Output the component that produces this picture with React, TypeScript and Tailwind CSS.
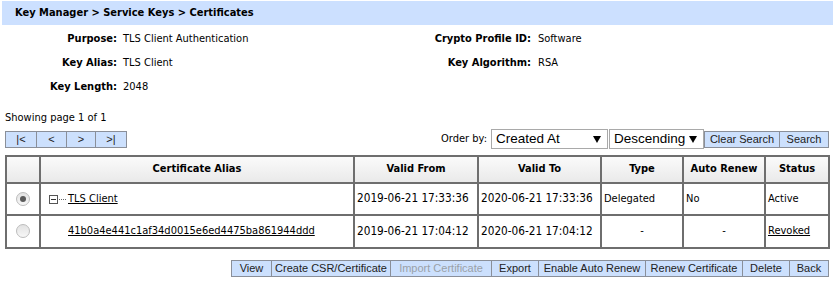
import type { ReactNode } from 'react'

const tah = "font-['DejaVu_Sans_Condensed','DejaVu_Sans',sans-serif]"
const arial = "font-['Liberation_Sans',Arial,sans-serif]"

function Btn({ children, w, disabled }: { children: ReactNode; w: string; disabled?: boolean }) {
	return (
		<button
			className={`${arial} ${w} h-[17px] -ml-px first:ml-0 border border-[#8a8f99] bg-[#cce0fd] text-[11px] leading-none ${
				disabled ? 'text-[#9aa0a8]' : 'text-[#222]'
			}`}>
			{children}
		</button>
	)
}

function Select({ value, w }: { value: string; w: string }) {
	return (
		<div className={`${w} h-5 flex items-center justify-between border border-[#a9a9a9] bg-white pl-1 pr-[6px]`}>
			<span className={`${arial} text-[13.5px] text-black leading-none`}>{value}</span>
			<svg width="8" height="7" viewBox="0 0 8 7">
				<path d="M0 0h8L4 7z" fill="#000" />
			</svg>
		</div>
	)
}

function Radio({ checked }: { checked?: boolean }) {
	return (
		<span className="inline-flex w-[14px] h-[14px] rounded-full border border-[#bdbdbd] bg-gradient-to-b from-[#e2e2e2] to-[#f7f7f7] items-center justify-center align-middle">
			{checked && <span className="w-[6px] h-[6px] rounded-full bg-[#5a5a5a]" />}
		</span>
	)
}

const th = 'border-2 border-[#6e6e6e] font-bold text-center px-1'
const td = 'border-2 border-[#6e6e6e] px-[2px]'
const num = 'text-[11.7px]'

export default function App() {
	return (
		<div className={`${tah} text-[11px] text-black w-[835px] h-[288px] bg-white`}>
			<div className="mx-[2px] mt-px h-6 bg-[#cce0ff] flex items-center pl-[13px] font-bold">
				Key Manager &gt; Service Keys &gt; Certificates
			</div>

			<div className="mt-[2px]">
				<div className="flex h-6 items-center">
					<div className="w-[117px] text-right font-bold">Purpose:</div>
					<div className="w-[306px] pl-[6px]">TLS Client Authentication</div>
					<div className="w-[108px] text-right font-bold">Crypto Profile ID:</div>
					<div className="pl-[7px]">Software</div>
				</div>
				<div className="flex h-6 items-center">
					<div className="w-[117px] text-right font-bold">Key Alias:</div>
					<div className="w-[306px] pl-[6px]">TLS Client</div>
					<div className="w-[108px] text-right font-bold">Key Algorithm:</div>
					<div className="pl-[7px]">RSA</div>
				</div>
				<div className="flex h-[25px] items-center">
					<div className="w-[117px] text-right font-bold">Key Length:</div>
					<div className="pl-[6px]">2048</div>
				</div>
			</div>

			<div className="pl-[5px] mt-[10px] h-4 flex items-center">Showing page 1 of 1</div>

			<div className="flex items-center justify-between pl-[5px] pr-[6px] mt-[1px] h-6">
				<div className="flex">
					<Btn w="w-[32px]">|&lt;</Btn>
					<Btn w="w-[31px]">&lt;</Btn>
					<Btn w="w-[30px]">&gt;</Btn>
					<Btn w="w-[32px]">&gt;|</Btn>
				</div>
				<div className="flex items-center">
					<span className="mr-[4px]">Order by:</span>
					<Select value="Created At" w="w-[117px]" />
					<div className="w-px" />
					<Select value="Descending" w="w-[95px]" />
					<div className="w-px" />
					<Btn w="w-[76px]">Clear Search</Btn>
					<Btn w="w-[50px]">Search</Btn>
				</div>
			</div>

			<div className="pl-[5px] pr-[5px] mt-[4px]">
				<table className="w-[825px] border-collapse border-2 border-[#8a8a8a] table-fixed">
					<colgroup>
						<col className="w-[34px]" />
						<col className="w-[314px]" />
						<col className="w-[124px]" />
						<col className="w-[123px]" />
						<col className="w-[82px]" />
						<col className="w-[82px]" />
						<col />
					</colgroup>
					<thead>
						<tr className="h-[27px] bg-gradient-to-b from-[#fbfbfb] to-[#e9e9e9]">
							<th className={th}></th>
							<th className={th}>Certificate Alias</th>
							<th className={th}>Valid From</th>
							<th className={th}>Valid To</th>
							<th className={th}>Type</th>
							<th className={th}>Auto Renew</th>
							<th className={th}>Status</th>
						</tr>
					</thead>
					<tbody>
						<tr className="h-8">
							<td className={`${td} text-center`}>
								<Radio checked />
							</td>
							<td className={`${td} pl-[6px]`}>
								<div className="flex items-center">
									<span className="w-[9px] h-[9px] border border-[#555] flex items-center justify-center ml-[2px]">
										<span className="w-[5px] h-px bg-[#333]" />
									</span>
									<span className="w-[7px] border-t border-dotted border-[#666] ml-px mr-[2px]" />
									<span className="underline">TLS Client</span>
								</div>
							</td>
							<td className={`${td} ${num}`}>2019-06-21 17:33:36</td>
							<td className={`${td} ${num}`}>2020-06-21 17:33:36</td>
							<td className={td}>Delegated</td>
							<td className={td}>No</td>
							<td className={td}>Active</td>
						</tr>
						<tr className="h-[33px]">
							<td className={`${td} text-center`}>
								<Radio />
							</td>
							<td className={`${td} pl-[27px]`}>
								<span className="underline">41b0a4e441c1af34d0015e6ed4475ba861944ddd</span>
							</td>
							<td className={`${td} ${num}`}>2019-06-21 17:04:12</td>
							<td className={`${td} ${num}`}>2020-06-21 17:04:12</td>
							<td className={`${td} text-center`}>-</td>
							<td className={`${td} text-center`}>-</td>
							<td className={td}>
								<span className="underline">Revoked</span>
							</td>
						</tr>
					</tbody>
				</table>
			</div>

			<div className="flex justify-end pr-[6px] mt-[11px]">
				<Btn w="w-[41px]">View</Btn>
				<Btn w="w-[120px]">Create CSR/Certificate</Btn>
				<Btn w="w-[102px]" disabled>
					Import Certificate
				</Btn>
				<Btn w="w-[48px]">Export</Btn>
				<Btn w="w-[108px]">Enable Auto Renew</Btn>
				<Btn w="w-[98px]">Renew Certificate</Btn>
				<Btn w="w-[48px]">Delete</Btn>
				<Btn w="w-[40px]">Back</Btn>
			</div>
		</div>
	)
}
